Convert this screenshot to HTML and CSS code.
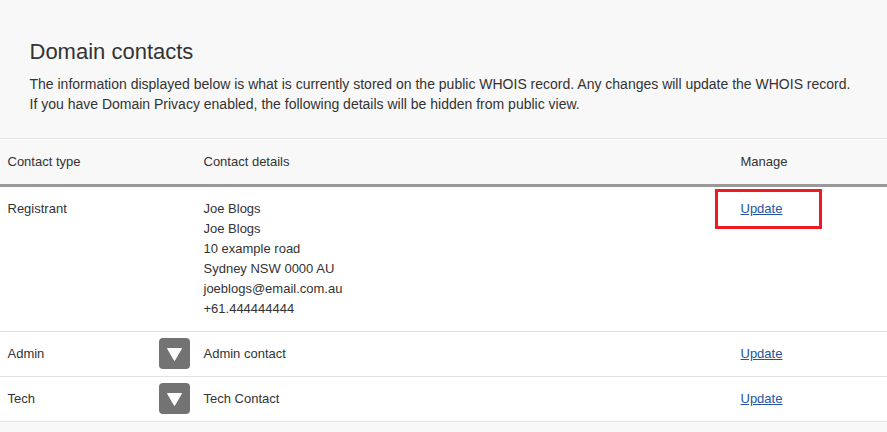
FILE: index.html
```html
<!DOCTYPE html>
<html lang="en">
<head>
    <meta charset="UTF-8">
    <meta name="viewport" content="width=device-width, initial-scale=1.0">
    <title>Domain contacts</title>
    <link rel="stylesheet" href="styles.css">
</head>
<body>
    <div class="intro">
        <h1>Domain contacts</h1>
        <p>The information displayed below is what is currently stored on the public WHOIS record. Any changes will update the WHOIS record.<br>
        If you have Domain Privacy enabled, the following details will be hidden from public view.</p>
    </div>

    <div class="contacts">
        <div class="row head">
            <div>Contact type</div>
            <div></div>
            <div>Contact details</div>
            <div>Manage</div>
        </div>
        <div class="row">
            <div>Registrant</div>
            <div></div>
            <div>
                Joe Blogs<br>
                Joe Blogs<br>
                10 example road<br>
                Sydney NSW 0000 AU<br>
                joeblogs@email.com.au<br>
                +61.444444444
            </div>
            <div><a href="#" class="highlight">Update</a></div>
        </div>
        <div class="row">
            <div>Admin</div>
            <div>
                <button class="toggle" aria-label="Show admin contact">
                    <svg width="31" height="31" viewBox="0 0 31 31"><path d="M8.5 10.5h14l-7 12z" fill="#fff" stroke="#fff" stroke-linejoin="round"/></svg>
                </button>
            </div>
            <div>Admin contact</div>
            <div><a href="#">Update</a></div>
        </div>
        <div class="row">
            <div>Tech</div>
            <div>
                <button class="toggle" aria-label="Show tech contact">
                    <svg width="31" height="31" viewBox="0 0 31 31"><path d="M8.5 10.5h14l-7 12z" fill="#fff" stroke="#fff" stroke-linejoin="round"/></svg>
                </button>
            </div>
            <div>Tech Contact</div>
            <div><a href="#">Update</a></div>
        </div>
    </div>
</body>
</html>
```
FILE: styles.css
```css
body {
    margin: 0;
    font-family: "Liberation Sans", Arial, sans-serif;
    font-size: 13px;
    line-height: 20px;
    color: #333;
    background-color: #f8f8f8;
}
.intro {
    padding: 37px 29.5px 24px;
}
h1 {
    margin: 0 0 7px;
    font-size: 22px;
    font-weight: normal;
    line-height: 30px;
}
p {
    margin: 0;
    font-size: 14px;
    white-space: nowrap;
}
.contacts {
    border-bottom: 1px solid #fff;
}
.row {
    display: grid;
    grid-template-columns: 151.5px 44.5px 537px 1fr;
    padding: 12px 7.5px;
    background-color: #fff;
    border-bottom: 1px solid #e1e1e1;
}
.head {
    padding: 13px 7.5px 12px;
    background-color: #f8f8f8;
    border-top: 1px solid #e1e1e1;
    border-bottom: 3px solid #999;
    box-shadow: inset 0 1px #fff;
}
a {
    color: #2354a0;
}
.highlight {
    position: relative;
}
.highlight::after {
    content: "";
    position: absolute;
    top: -12px;
    left: -25.5px;
    width: 101px;
    height: 34px;
    border: 3px solid #ed1c24;
}
.toggle {
    display: block;
    width: 31px;
    height: 31px;
    margin: -6px 0 -5px;
    padding: 0;
    border: none;
    border-radius: 4px;
    background-color: #737373;
    cursor: pointer;
}
.toggle svg {
    display: block;
}
```
